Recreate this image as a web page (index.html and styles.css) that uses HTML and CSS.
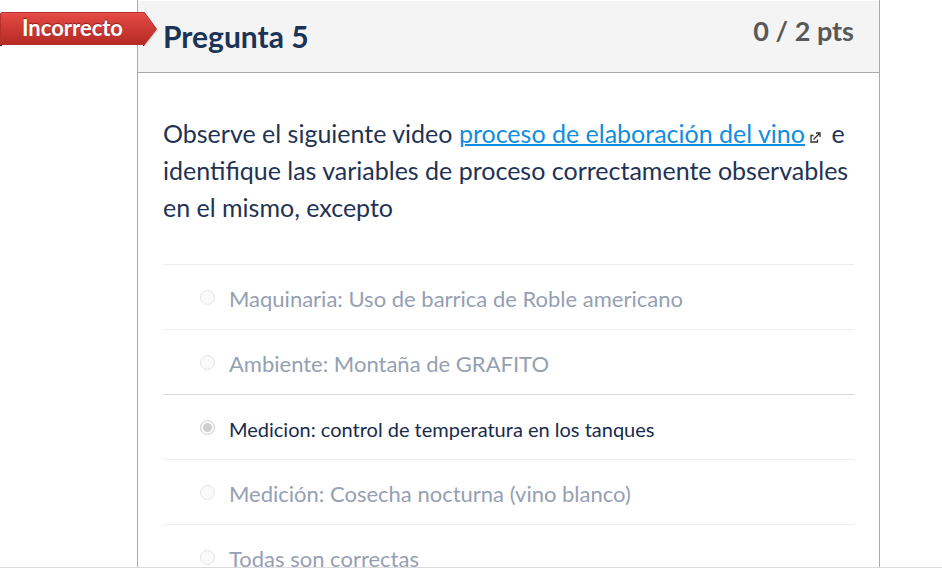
FILE: index.html
```html
<!DOCTYPE html>
<html lang="es">
<head>
<meta charset="utf-8">
<meta name="viewport" content="width=device-width, initial-scale=1">
<title>Pregunta 5</title>
<link rel="stylesheet" href="styles.css">
</head>
<body>
<main class="viewer">
  <article class="question">
    <header class="question-header">
      <div class="flag">
        <svg class="flag-shape" viewBox="0 0 158 36" aria-hidden="true">
          <defs>
            <linearGradient id="flag-fill" x1="0" y1="0" x2="0" y2="1">
              <stop offset="0" stop-color="#e64a46"/>
              <stop offset="1" stop-color="#b52a24"/>
            </linearGradient>
          </defs>
          <path d="M145 33.500L157.500 17.500" fill="none" stroke="#000" stroke-opacity=".12" stroke-width="2"/>
          <path d="M0 32h2v2H0zM143 32h2l-1 2h-1z" fill="#6d1512"/>
          <path d="M1.500 .5H144.500L156.500 17L144.500 32.500H.5V1.500z" fill="url(#flag-fill)" stroke="#b8302b"/>
          <path d="M2 1.500H144" stroke="#e4524e" fill="none"/>
        </svg>
        <span class="flag-text">Incorrecto</span>
      </div>
      <h1 class="question-name">Pregunta 5</h1>
      <div class="question-points">0 / 2 pts</div>
    </header>
    <div class="question-body">
      <p class="question-text">Observe el siguiente video <a href="#video">proceso de elaboración del vino</a><svg class="external" viewBox="0 0 11 11" aria-hidden="true"><path d="M3.500 3.500H1V10H7.500V7.500M3.500 7.500L9.500 1.500M6 1H10V5" fill="none" stroke="#333" stroke-width="1.300"/></svg> e identifique las variables de proceso correctamente observables en el mismo, excepto</p>
      <div class="answers">
        <label class="answer"><input type="radio" name="answer" disabled><span>Maquinaria: Uso de barrica de Roble americano</span></label>
        <label class="answer"><input type="radio" name="answer" disabled><span>Ambiente: Montaña de GRAFITO</span></label>
        <label class="answer selected"><input type="radio" name="answer" checked disabled><span>Medicion: control de temperatura en los tanques</span></label>
        <label class="answer"><input type="radio" name="answer" disabled><span>Medición: Cosecha nocturna (vino blanco)</span></label>
        <label class="answer"><input type="radio" name="answer" disabled><span>Todas son correctas</span></label>
      </div>
    </div>
  </article>
</main>
</body>
</html>
```
FILE: styles.css
```css
* {
  box-sizing: border-box;
}

body {
  margin: 0;
  height: 100vh;
  padding-bottom: 10px;
  background: #fff;
  color: #2d3b45;
  font-family: Lato, "Liberation Sans", sans-serif;
}

.viewer {
  height: 100%;
  overflow: hidden;
  border-bottom: 1px solid #dcdcde;
}

.question {
  margin: 0 62px 0 137px;
  border: 1px solid #aaa;
  border-top: 0;
}

.question-header {
  position: relative;
  display: flex;
  justify-content: space-between;
  align-items: flex-start;
  padding: 13px 25px 16px;
  border-top: 1px solid #fff;
  border-bottom: 1px solid #aaa;
  background: #f4f4f4;
}

.flag {
  position: absolute;
  top: 11px;
  left: -138px;
  width: 158px;
  height: 36px;
}

.flag-shape {
  position: absolute;
  inset: 0;
}

.flag-text {
  position: relative;
  display: block;
  padding-left: 22px;
  color: #fff;
  font-size: 22px;
  font-weight: 700;
  line-height: 32px;
  text-shadow: 0 -1px 1px #8a1f1b;
}

.question-name {
  margin: 0;
  padding-top: 2px;
  color: #1c3358;
  font-size: 30px;
  font-weight: 700;
  line-height: 40px;
}

.question-points {
  color: #595959;
  font-size: 27px;
  font-weight: 700;
  line-height: 34px;
}

.question-body {
  padding: 42px 25px 25px;
}

.question-text {
  margin: 0 0 38px;
  color: #1f3354;
  font-size: 25px;
  line-height: 37px;
}

.question-text a {
  color: #0e8ee0;
  text-decoration: underline;
  text-decoration-thickness: 2px;
}

.external {
  width: 11px;
  height: 11px;
  margin: 0 4px 0 5px;
}

.answer {
  display: flex;
  align-items: center;
  gap: 14px;
  height: 65px;
  padding: 4px 0 0 37px;
  border-top: 1px solid #ededed;
  color: #95a0b3;
  font-size: 22px;
  line-height: 32px;
}

.answer input {
  appearance: none;
  width: 15px;
  height: 15px;
  margin: 0 0 3px;
  border: 1px solid #e4e4e4;
  border-radius: 50%;
  background: #fafafa;
}

.selected {
  border-top-color: #d9d9dc;
  color: #172b4d;
  font-size: 20px;
}

.selected input {
  border-color: #ccc;
  background: radial-gradient(circle, #cfcfcf 4px, #fafafa 5px);
}
```
